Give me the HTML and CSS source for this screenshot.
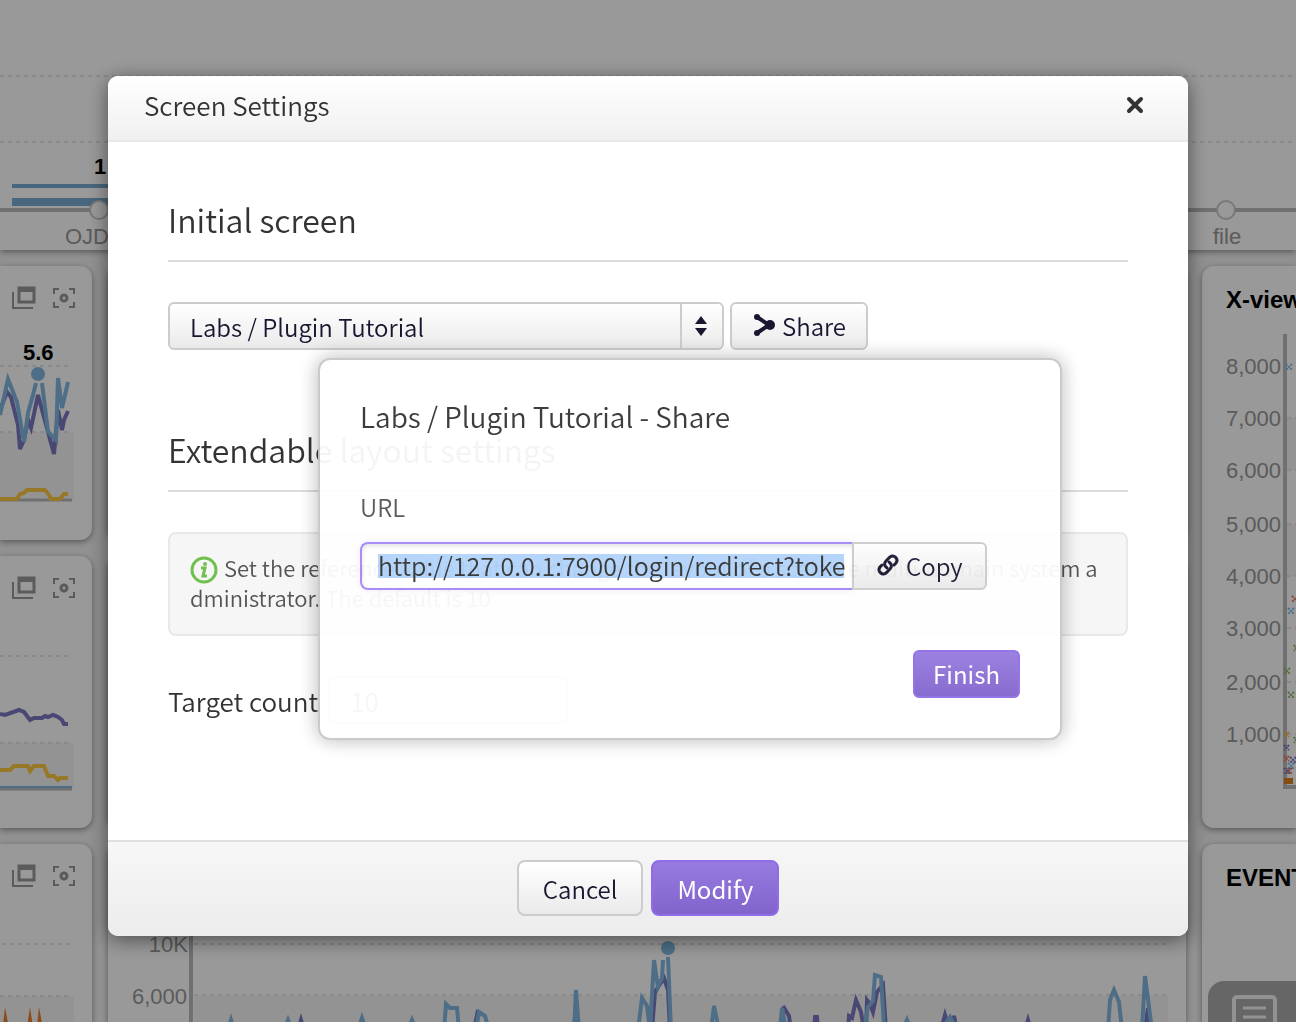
FILE: index.html
```
<!DOCTYPE html>
<html lang="en">
<head>
<meta charset="utf-8">
<title>Screen Settings</title>
<link rel="stylesheet" href="styles.css">
</head>
<body>
<svg class="defs" aria-hidden="true">
  <symbol id="icon-windows" viewBox="0 0 24 24">
    <path d="M7 2h15v14H7z" fill="none" stroke="currentColor" stroke-width="3"/>
    <path d="M6 1h17v5H6z" fill="currentColor"/>
    <path d="M1 6v16h20" fill="none" stroke="currentColor" stroke-width="2"/>
  </symbol>
  <symbol id="icon-focus" viewBox="0 0 24 24">
    <path d="M2 8V3h5M17 3h5v5M22 16v5h-5M7 21H2v-5" fill="none" stroke="currentColor" stroke-width="2"/>
    <circle cx="12" cy="12" r="3" fill="none" stroke="currentColor" stroke-width="3"/>
  </symbol>
</svg>

<main class="dashboard">
  <section class="topology">
    <svg class="chart" width="100%" height="250">
      <path class="grid" d="M0 76h4000M0 142h4000"/>
      <path class="axis" d="M0 210h4000"/>
      <path class="bar" d="M12 184h140v4H12zM12 198h140v8H12z"/>
      <circle class="node" cx="99" cy="210" r="9"/>
      <text class="value" x="94" y="174">1</text>
      <text class="label" x="65" y="244">OJD</text>
      <svg x="100%" overflow="visible">
        <circle class="node" cx="-70" cy="210" r="9"/>
        <text class="label" x="-83" y="244">file</text>
      </svg>
    </svg>
  </section>

  <div class="columns">
    <div class="column column-left">
      <section class="card card-short">
        <div class="tools"><svg><use href="#icon-windows"/></svg><svg><use href="#icon-focus"/></svg></div>
        <svg class="chart" width="92" height="200" viewBox="0 310 92 200">
          <path class="band" d="M0 432h74v68H0z"/>
          <path class="grid" d="M0 366h70M0 432h72"/>
          <path class="axis thin" d="M0 500h72"/>
          <path class="yellow" d="M0 499h17l3-5 4-1 3-3h18l4 5 2 4h9l4-5h4"/>
          <path class="purple" d="M0 410L7 392l4 5 7 28 2 24 4-9 4-20 3 8 7-33 10 37 6 22 4-44 4 20 2-10 4-9"/>
          <path class="blue" d="M0 415l8-36 9 23 7 40 4-29 5-18 3-12M42 383l6 49 8 8 2-62 4 30 6-26"/>
          <circle class="peak" cx="38" cy="374" r="7"/>
          <text class="value" x="23" y="360">5.6</text>
        </svg>
      </section>
      <section class="card card-medium">
        <div class="tools"><svg><use href="#icon-windows"/></svg><svg><use href="#icon-focus"/></svg></div>
        <svg class="chart" width="92" height="200" viewBox="0 600 92 200">
          <path class="band" d="M0 743h74v46H0z"/>
          <path class="grid" d="M0 656h72M0 743h72"/>
          <path class="axis thin" d="M0 789h72"/>
          <path class="blue thin" d="M0 787h72"/>
          <path class="purple" d="M0 714l5 1 14-5 5 2 6 8 4-2h8l3-2 3 1 5-2 5 2 4 3 2 4h4"/>
          <path class="yellow" d="M0 770h10l4-4h14l2 5 4-5h10l4 10h6l4 4 2-2h8"/>
        </svg>
      </section>
      <section class="card card-rest">
        <div class="tools"><svg><use href="#icon-windows"/></svg><svg><use href="#icon-focus"/></svg></div>
        <svg class="chart" width="92" height="134" viewBox="0 888 92 134">
          <path class="band" d="M0 996h74v92H0z"/>
          <path class="grid" d="M2 944h70M0 996h72"/>
          <path class="orange" d="M2 1034l3-27 5 27zM26 1034l4-27 4 27zM36 1034l3-27 5 27z"/>
        </svg>
      </section>
    </div>

    <div class="column">
      <section class="card card-short"></section>
      <section class="card card-medium"></section>
      <section class="card card-rest">
        <svg class="chart" width="1078" height="178" viewBox="108 844 1078 178">
          <path class="band" d="M194 996h974v92H194z"/>
          <path class="grid" d="M194 944h972M194 995h972"/>
          <path class="axis" d="M191 900v200"/>
          <text class="label" x="188" y="952" text-anchor="end">10K</text>
          <text class="label" x="187" y="1004" text-anchor="end">6,000</text>
          <path class="purple" d="M298 1030l3-10 3 10M474 1030l4-20M652 1030l3-38 9-14 4 12 2 40M783 1006l6 10 2 14M814 1030l1-13h2l1 13M848 1030l1-14 3 2 4-18 5 12 3 18M866 1030l1-30 3 4 3 8 4-20 6-7 3 45M941 1030l4-15 3 10M951 1030l3-14 3 14M1025 1030l3-10 3 10M1145 1030l3-22 3 22"/>
          <path class="blue" d="M228 1030l3-10 3 10M284 1030l4-10 4 10M358 1030l4-12 4 12M408 1030l4-10 4 10M444 1030l2-26 4 4h7l2 22M476 1030l3-18 6 4 4 14M574 1030l2-40 3 40M638 1030l4-32 5 8 3 24 4-70 4 27 4-9 1-18M668 957l3 73M711 1030l3-24 5 24M780 1030l2-22 4 22M864 1030l4-23 5-6 2-26 6 2 3 50M903 1030l4-10 4 10M941 1030l9-13 7 13M1108 1030l2-30 4-10 5 12 3 28M1142 1030l3-54 7 54"/>
          <circle class="peak" cx="668" cy="948" r="7"/>
        </svg>
      </section>
    </div>

    <div class="column column-right">
      <section class="card card-tall">
        <h2 class="card-title">X-view</h2>
        <svg class="chart" width="94" height="500" viewBox="1202 314 94 500">
          <path class="band" d="M1287 418h9v52h-9zM1287 524h9v52h-9z"/>
          <path class="grid" d="M1287 418h9M1287 470h9M1287 524h9M1287 576h9M1287 628h9M1287 682h9M1287 734h9"/>
          <path class="axis" d="M1285 334v455"/>
          <path class="axis" d="M1283 787h13"/>
          <g class="label" text-anchor="end">
            <text x="1281" y="374">8,000</text><text x="1281" y="426">7,000</text>
            <text x="1281" y="478">6,000</text><text x="1281" y="532">5,000</text>
            <text x="1281" y="584">4,000</text><text x="1281" y="636">3,000</text>
            <text x="1281" y="690">2,000</text><text x="1281" y="742">1,000</text>
          </g>
          <g class="marks">
            <path stroke="#7bbae7" d="M1286 364l6 6m0-6l-6 6M1288 608l6 6m0-6l-6 6M1288 763l6 6m0-6l-6 6"/>
            <path stroke="#f07058" d="M1292 596l6 6m0-6l-6 6M1284 756l5 5m0-5l-5 5M1286 768l6 6m0-6l-6 6"/>
            <path stroke="#8cb868" d="M1284 668l6 6m0-6l-6 6M1288 692l6 6m0-6l-6 6M1294 645l4 6m0-6l-4 6M1294 737l4 6m0-6l-4 6"/>
            <path stroke="#f0b848" d="M1284 732l5 5m0-5l-5 5"/>
            <path stroke="#7977c2" d="M1284 745l5 5m0-5l-5 5M1290 757l6 6m0-6l-6 6M1284 768l6 6m0-6l-6 6"/>
            <path class="solid" stroke="#e08020" d="M1284 781h9"/>
          </g>
        </svg>
      </section>
      <section class="card card-rest">
        <h2 class="card-title">EVENT</h2>
      </section>
    </div>
  </div>

  <button class="memo" aria-label="Event list">
    <svg width="46" height="27" viewBox="0 0 46 27" fill="none" stroke="currentColor" stroke-width="4">
      <rect x="2" y="2" width="41" height="42" rx="3"/>
      <path d="M11 13h23M11 22h23" stroke-width="3"/>
    </svg>
  </button>
</main>

<div class="overlay">
  <div class="modal" role="dialog" aria-labelledby="modal-title">
    <header class="modal-head">
      <h1 id="modal-title">Screen Settings</h1>
      <button class="close" aria-label="Close">
        <svg width="18" height="18" viewBox="0 0 18 18"><path d="M3 3l12 12M15 3L3 15" stroke="currentColor" stroke-width="4" stroke-linecap="round"/></svg>
      </button>
    </header>

    <div class="modal-body">
      <h2 class="section-title">Initial screen</h2>
      <div class="screen-row">
        <div class="select">
          <select aria-label="Initial screen"><option>Labs / Plugin Tutorial</option></select>
          <svg class="select-arrows" width="12" height="20" viewBox="0 0 12 20"><path d="M6 0l6 8H0zM6 20l6-8H0z" fill="currentColor"/></svg>
        </div>
        <div class="share">
          <button class="btn">
            <svg width="24" height="24" viewBox="0 0 24 24" fill="currentColor"><path d="M5 4l12 8L5 20" fill="none" stroke="currentColor" stroke-width="4"/><circle cx="5" cy="4" r="3"/><circle cx="18" cy="12" r="5"/><circle cx="5" cy="20" r="3"/></svg>
            Share
          </button>
          <form class="popup">
            <h3>Labs / Plugin Tutorial - Share</h3>
            <label for="url">URL</label>
            <div class="url-row">
              <input id="url" type="text" readonly value="http://127.0.0.1:7900/login/redirect?toke">
              <button type="button" class="btn btn-copy">
                <svg width="24" height="24" viewBox="0 0 24 24" fill="none" stroke="currentColor" stroke-width="3" stroke-linecap="round"><path d="M11 15c-3-2-3-5-1-7l4-4c4-3 9 2 6 6l-2 2"/><path d="M13 9c3 2 3 5 1 7l-4 4c-4 3-9-2-6-6l2-2"/></svg>
                Copy
              </button>
            </div>
            <button type="button" class="btn btn-primary btn-finish">Finish</button>
          </form>
        </div>
      </div>

      <h2 class="section-title">Extendable layout settings</h2>
      <p class="note">
        <svg width="28" height="28" viewBox="0 0 28 28"><circle cx="14" cy="14" r="12" fill="none" stroke="#70c050" stroke-width="3"/><circle cx="15" cy="8" r="2" fill="#70c050"/><path d="M11 12h4l-2 8h4" fill="none" stroke="#70c050" stroke-width="3"/></svg>
        Set the reference value that can change the layout of a scalable multi-domain system administrator. The default is 10
      </p>
      <div class="count-row">
        <label for="count">Target count</label>
        <input id="count" type="text" value="10">
      </div>
    </div>

    <footer class="modal-foot">
      <button class="btn btn-large">Cancel</button>
      <button class="btn btn-large btn-primary">Modify</button>
    </footer>
  </div>
</div>
</body>
</html>
```
FILE: styles.css
```
* { box-sizing: border-box; }

body {
  margin: 0;
  height: 100vh;
  overflow: hidden;
  background: #f2f2f2;
  color: #333;
  font-family: "Noto Sans CJK KR", "Noto Sans", sans-serif;
  font-weight: 350;
}

h1, h2, h3, p { margin: 0; font-weight: inherit; }
button, input, select { margin: 0; font: inherit; color: inherit; outline: none; }
.defs { position: absolute; width: 0; height: 0; }

/* Dashboard */
.dashboard {
  display: flex;
  flex-direction: column;
  gap: 16px;
  height: 100vh;
  font-family: "Liberation Sans", Arial, sans-serif;
}
.topology { background: #fff; box-shadow: 0 2px 6px rgba(0, 0, 0, .4); }
.columns {
  flex: 1;
  min-height: 0;
  display: grid;
  grid-template-columns: 92px minmax(0, 1fr) 94px;
  grid-template-rows: minmax(0, 1fr);
  gap: 16px;
}
.column { display: flex; flex-direction: column; gap: 16px; }
.card {
  overflow: hidden;
  flex: none;
  border-radius: 12px;
  background: #fff;
  box-shadow: 0 2px 6px rgba(0, 0, 0, .4);
}
.column-left .card { border-radius: 0 12px 12px 0; }
.column-right .card { border-radius: 12px 0 0 12px; }
.card-short { height: 274px; }
.card-medium { height: 272px; }
.card-tall { height: 562px; }
.column .card-rest { flex: 1; min-height: 0; border-bottom-left-radius: 0; border-bottom-right-radius: 0; }
.tools {
  display: flex;
  gap: 16px;
  justify-content: flex-end;
  padding: 20px 16px 0 0;
  color: #989898;
}
.tools svg { width: 24px; height: 24px; }
.card-title {
  padding: 20px 0 0 24px;
  font-size: 24px;
  line-height: 28px;
  font-weight: 700;
  white-space: nowrap;
  color: #000;
}
.chart { display: block; }
.chart path { fill: none; }
.chart .grid { stroke: #e4e4e4; stroke-width: 2; stroke-dasharray: 4 4; }
.chart .band { fill: #f6f6f6; }
.chart .axis { stroke: #bbb; stroke-width: 4; }
.chart .axis.thin { stroke-width: 3; }
.chart .bar { fill: #78aad0; }
.chart .node { fill: #fff; stroke: #c8c8c8; stroke-width: 2; }
.chart .blue { stroke: #80b8e0; stroke-width: 4; }
.chart .blue.thin { stroke-width: 2; }
.chart .purple { stroke: #7b77c2; stroke-width: 4; }
.chart .yellow { stroke: #fcc940; stroke-width: 4; }
.chart .orange { fill: #e87d2d; }
.chart .peak { fill: #80b8e0; }
.chart .marks path { stroke-width: 2; stroke-dasharray: 2 1; }
.chart .marks .solid { stroke-width: 6; stroke-dasharray: none; }
.chart .label { fill: #989898; font-size: 22px; }
.chart .value { fill: #000; font-size: 22px; font-weight: 700; }
.memo {
  position: fixed;
  right: 0;
  bottom: 0;
  width: 88px;
  height: 41px;
  overflow: hidden;
  padding: 14px 0 0 24px;
  border: 0;
  border-radius: 16px 0 0 0;
  background: #aaa;
  color: #f4f4f4;
}
.memo svg { display: block; }

/* Modal */
.overlay {
  position: fixed;
  inset: 0;
  padding: 76px 24px 0;
  background: rgba(0, 0, 0, .4);
}
.modal {
  max-width: 1080px;
  margin: 0 auto;
  border-radius: 10px;
  background: #fff;
  box-shadow: 0 4px 20px rgba(0, 0, 0, .5);
}
.modal-head {
  display: flex;
  align-items: center;
  justify-content: space-between;
  height: 66px;
  padding: 0 44px 6px 36px;
  border-bottom: 2px solid #e8e8e8;
  border-radius: 10px 10px 0 0;
  background: linear-gradient(#fff, #f0f0f0);
}
.modal-head h1 { font-size: 26px; line-height: 36px; }
.close { display: flex; padding: 0; border: 0; background: none; }
.modal-body { padding: 52px 60px 116px; }
.section-title {
  padding-bottom: 16px;
  border-bottom: 2px solid #dcdcdc;
  font-size: 32px;
  line-height: 50px;
}
.screen-row { display: flex; gap: 6px; margin: 40px 0 74px; color: #1a1530; }

.select { position: relative; width: 556px; }
.select select {
  width: 100%;
  height: 48px;
  padding: 0 64px 0 20px;
  appearance: none;
  border: 2px solid #ccc;
  border-radius: 6px;
  background: linear-gradient(#ccc, #ccc) right 40px top / 2px 100% no-repeat, linear-gradient(#fff, #eaeaea);
  font-size: 24px;
}
.select-arrows { position: absolute; top: 14px; right: 17px; pointer-events: none; }

.btn {
  display: flex;
  align-items: center;
  justify-content: center;
  gap: 6px;
  height: 48px;
  padding: 0 20px;
  border: 2px solid #ccc;
  border-radius: 6px;
  background: linear-gradient(#fff, #eaeaea);
  color: #1a1530;
  font-size: 24px;
  line-height: 32px;
}
.btn svg { flex: none; margin-top: -2px; }
.btn-primary {
  border-color: #8f6de8;
  background: linear-gradient(#977be0, #8264cc);
  color: #fff;
  font-weight: 400;
}
.btn-large { height: 56px; padding: 2px 24px 0; border-radius: 8px; }

.share { position: relative; }
.popup {
  position: absolute;
  top: 56px;
  left: -412px;
  z-index: 1;
  display: flex;
  flex-direction: column;
  width: 744px;
  padding: 36px 40px 40px;
  border: 2px solid #c8c8c8;
  border-radius: 12px;
  background: #fff;
  box-shadow: 0 0 20px rgba(0, 0, 0, .3);
  color: #333;
  opacity: .95;
}
.popup h3 { font-size: 28px; line-height: 40px; }
.popup label { margin-top: 52px; font-size: 24px; line-height: 38px; color: #555; }
.url-row { display: flex; margin-top: 16px; }
/* The link is shown marked, ready to be copied */
.url-row input {
  width: 494px;
  height: 48px;
  padding: 0 8px 2px 16px;
  border: 2px solid #a688f4;
  border-right: 0;
  border-radius: 8px 0 0 8px;
  background: linear-gradient(#b2d5fb, #b2d5fb) 16px 10px / 466px 24px no-repeat, #fff;
  box-shadow: inset 0 2px 4px rgba(0, 0, 0, .12), 0 0 6px rgba(166, 136, 244, .2);
  font-size: 25px;
}
.btn-copy { position: relative; margin-left: -2px; padding: 0 22px; border-radius: 0 6px 6px 0; }
.btn-finish { align-self: flex-end; margin-top: 60px; padding: 0 18px; }

.note {
  height: 104px;
  margin: 40px 0;
  padding: 18px 20px;
  border: 2px solid #e8e8e8;
  border-radius: 8px;
  background: #f6f6f6;
  font-size: 22px;
  line-height: 30px;
  color: #555;
  word-break: break-all;
}
.note svg { margin: -4px 1px -4px 0; vertical-align: -3px; }
.count-row { display: flex; align-items: center; gap: 10px; font-size: 26px; }
.count-row input {
  width: 240px;
  height: 48px;
  padding: 0 20px;
  border: 2px solid #ccc;
  border-radius: 8px;
  color: #555;
}
.modal-foot {
  display: flex;
  justify-content: center;
  gap: 8px;
  padding: 18px 0 20px;
  border-top: 2px solid #e0e0e0;
  border-radius: 0 0 10px 10px;
  background: linear-gradient(#f7f7f7, #ececec);
}
```
